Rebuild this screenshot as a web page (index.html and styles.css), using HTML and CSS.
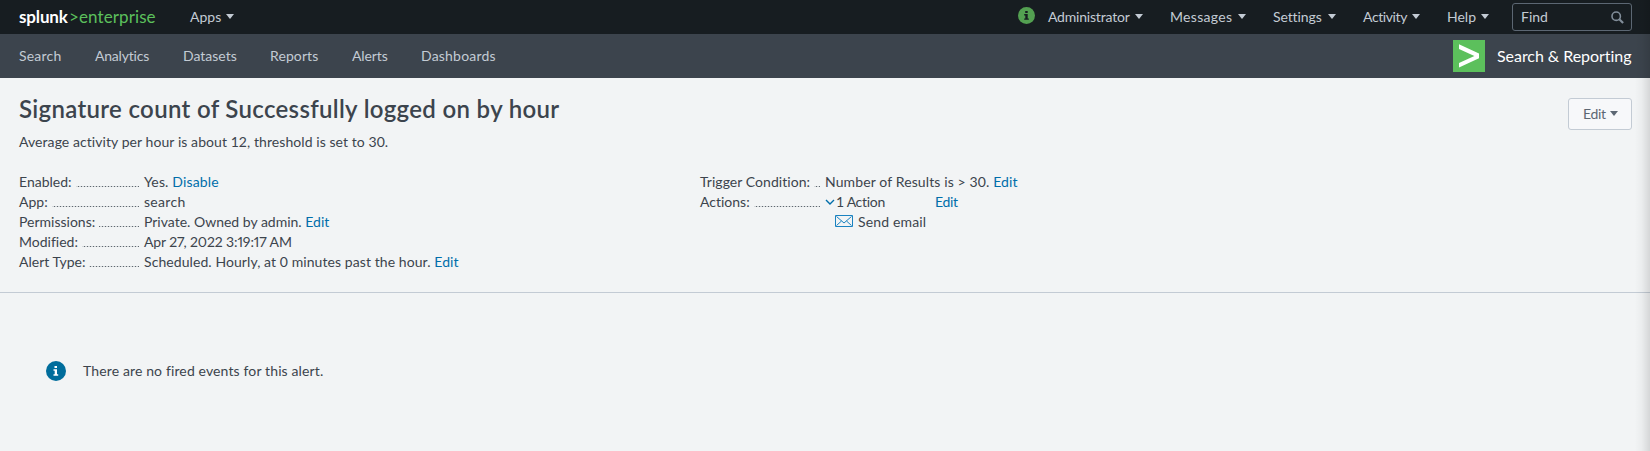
FILE: index.html
```
<!DOCTYPE html>
<html lang="en">
<head>
<meta charset="utf-8">
<title>Signature count of Successfully logged on by hour | Splunk</title>
<link rel="stylesheet" href="styles.css">
</head>
<body>
<header class="topbar">
  <a class="brand"><span class="brand-name">splunk</span><span class="brand-gt">&gt;</span><span class="brand-edition">enterprise</span></a>
  <a class="menu apps"><span>Apps</span><i class="caret"></i></a>
  <svg class="health" viewBox="0 0 17 17"><circle cx="8.5" cy="8.5" r="8.5" fill="#53a051"/><path d="M7.2 4h2.5v2H7.2zM6.2 7.1h3.5v4.4h1.1v1.3H6.2v-1.3h1.1V8.4H6.2z" fill="#171d21"/></svg>
  <nav class="system">
    <a class="menu admin"><span>Administrator</span><i class="caret"></i></a>
    <a class="menu messages"><span>Messages</span><i class="caret"></i></a>
    <a class="menu settings"><span>Settings</span><i class="caret"></i></a>
    <a class="menu activity"><span>Activity</span><i class="caret"></i></a>
    <a class="menu help"><span>Help</span><i class="caret"></i></a>
  </nav>
  <div class="find"><span>Find</span><svg viewBox="0 0 13 13"><circle cx="5.2" cy="5.2" r="4.2" fill="none" stroke="#818d99" stroke-width="1.6"/><path d="M8.3 8.3l3.8 3.7" stroke="#818d99" stroke-width="2.2"/></svg></div>
</header>
<nav class="appbar">
  <a class="tab search">Search</a><a class="tab analytics">Analytics</a><a class="tab datasets">Datasets</a><a class="tab reports">Reports</a><a class="tab alerts">Alerts</a><a class="tab dashboards">Dashboards</a>
  <div class="app"><svg viewBox="0 0 32 32"><path d="M0 0h32v32H0z" fill="#5cc05c"/><path d="M6 4.3l20 9.1v4.9L6 27.6v-4.500l15.400-7.200L6 8.900z" fill="#fff"/></svg><span>Search &amp; Reporting</span></div>
</nav>
<main>
  <section class="summary">
    <div class="heading">
      <div>
        <h1>Signature count of Successfully logged on by hour</h1>
        <p class="desc">Average activity per hour is about 12, threshold is set to 30.</p>
      </div>
      <button class="edit"><span>Edit</span><i class="caret"></i></button>
    </div>
    <div class="details">
      <dl>
        <dt><span>Enabled:</span></dt><dd class="enabled">Yes. <a>Disable</a></dd>
        <dt><span>App:</span></dt><dd class="app-name">search</dd>
        <dt><span>Permissions:</span></dt><dd class="permissions">Private. Owned by admin. <a>Edit</a></dd>
        <dt><span>Modified:</span></dt><dd class="modified">Apr 27, 2022 3:19:17 AM</dd>
        <dt><span>Alert Type:</span></dt><dd class="schedule">Scheduled. Hourly, at 0 minutes past the hour. <a>Edit</a></dd>
      </dl>
      <dl class="trigger">
        <dt class="condition-label"><span>Trigger Condition:</span></dt><dd class="condition">Number of Results is &gt; 30. <a>Edit</a></dd>
        <dt><span>Actions:</span></dt>
        <dd class="actions">
          <div class="count"><svg viewBox="0 0 10 7"><path d="M1 1l4 4 4-4" fill="none" stroke="#006eaa" stroke-width="1.4"/></svg><span>1 Action</span><a>Edit</a></div>
          <div class="email"><svg viewBox="0 0 18 12"><path d="M.5.5h17v11H.5zM1.500 1.500L9 8l7.500-6.500M1.500 10.500l5-4.500M16.500 10.500l-5-4.500" fill="none" stroke="#1a82c0"/></svg><span>Send email</span></div>
        </dd>
      </dl>
    </div>
  </section>
  <section class="notice"><svg viewBox="0 0 20 20"><circle cx="10" cy="10" r="10" fill="#006d9c"/><path d="M8.500 5h2.500v2H8.500zM7.500 8.200H11v5h1.200v1.500H7.500v-1.500h1.200V9.700H7.500z" fill="#fff"/></svg><span>There are no fired events for this alert.</span></section>
  <div class="edge"></div>
</main>
</body>
</html>
```
FILE: styles.css
```
* { box-sizing: border-box; }
body { margin: 0; background: #f2f4f5; color: #3c444d; font: 14px/20px Lato, "Open Sans", sans-serif; font-variant-ligatures: none; height: 451px; overflow: hidden; }
h1, p, dl, dd, dt { margin: 0; font-weight: 400; }
a { color: #006eaa; white-space: nowrap; }
span { white-space: nowrap; }
.caret { border: 4px solid transparent; border-top: 5px solid currentColor; border-bottom: 0; margin-bottom: 1px; }
.topbar { height: 34px; background: #171d21; display: flex; align-items: center; padding: 0 18px 0 19px; }
.brand { display: flex; width: 171px; font: 17px/24px Lato, sans-serif; letter-spacing: .1px; }
.brand-name { color: #fff; font-weight: 700; width: 50px; letter-spacing: -.15px; }
.brand-gt { color: #5cc05c; width: 10px; }
.brand-edition { color: #5cc05c; }
.menu { display: flex; align-items: center; justify-content: space-between; color: #c3cbd4; }
.apps { width: 44px; }
.health { width: 17px; height: 17px; margin: 0 13px 3px auto; }
.system { display: flex; }
.admin { width: 95px; margin-right: 27px; letter-spacing: -.2px; }
.messages { width: 76px; margin-right: 27px; letter-spacing: .3px; }
.settings { width: 63px; margin-right: 27px; letter-spacing: -.1px; }
.activity { width: 57px; margin-right: 27px; letter-spacing: -.4px; }
.help { width: 42px; margin-right: 23px; }
.find { width: 120px; height: 28px; margin-top: -1px; border: 1px solid #5c6773; border-radius: 3px; display: flex; align-items: center; justify-content: space-between; padding: 1px 7px 0 8px; color: #c3cbd4; }
.find svg { width: 13px; height: 13px; }
.appbar { height: 44px; background: #3c444d; display: flex; align-items: center; padding: 0 18px 0 19px; }
.tab { color: #c3cbd4; }
.search { width: 76px; letter-spacing: .2px; }
.analytics { width: 88px; letter-spacing: -.2px; }
.datasets { width: 87px; letter-spacing: 0; }
.reports { width: 82px; letter-spacing: .1px; }
.alerts { width: 69px; letter-spacing: -.1px; }
.dashboards { letter-spacing: .2px; }
.app { margin-left: auto; display: flex; align-items: center; gap: 12px; color: #fff; font-size: 16px; letter-spacing: -.05px; }
.app svg { width: 32px; height: 32px; }
.app span { width: 135px; }
.summary { height: 215px; border-bottom: 1px solid #c3cbd4; padding: 20px 18px 0 19px; }
.heading { display: flex; justify-content: space-between; align-items: flex-start; height: 74px; }
h1 { font-size: 24px; line-height: 24px; font-weight: 600; letter-spacing: .32px; margin-top: -1px; }
.desc { margin-top: 11px; letter-spacing: .07px; }
.edit { font: inherit; letter-spacing: -.3px; width: 64px; height: 32px; padding: 0 13px 0 14px; border: 1px solid #c3cbd4; border-radius: 3px; background: #f7f8fa; color: #5c6773; display: flex; align-items: center; justify-content: space-between; }
.details { display: flex; }
dl { display: grid; grid-template-columns: 120px 1fr; column-gap: 5px; width: 681px; align-content: start; grid-auto-rows: minmax(20px, auto); }
dt { display: flex; gap: 4px; height: 20px; }
dt::after { content: ""; flex: 1; height: 1px; margin-top: 14px; background: repeating-linear-gradient(to left, #5f676f 0 1px, #d5d9db 1px 3px); }
.condition-label { letter-spacing: .05px; }
.enabled { letter-spacing: .15px; }
.app-name { letter-spacing: .3px; }
.permissions { letter-spacing: 0; }
.modified { font-feature-settings: "pnum"; letter-spacing: -.1px; }
.schedule { letter-spacing: .08px; }
.condition { letter-spacing: .12px; }
.count, .email { display: flex; align-items: center; height: 20px; }
.count { letter-spacing: -.3px; }
.count svg { width: 10px; height: 7px; margin-right: 1px; }
.count span { width: 99px; }
.email { letter-spacing: .15px; }
.email svg { width: 18px; height: 12px; margin: 0 5px 2px 10px; }
.notice { display: flex; align-items: center; gap: 17px; padding: 68px 0 0 46px; letter-spacing: .13px; }
.notice svg { width: 20px; height: 20px; }
.edge { position: absolute; right: 0; top: 0; width: 15px; height: 451px; background: linear-gradient(to right, transparent, rgba(0,0,0,.03) 45%, rgba(0,0,0,.12)); }
```
